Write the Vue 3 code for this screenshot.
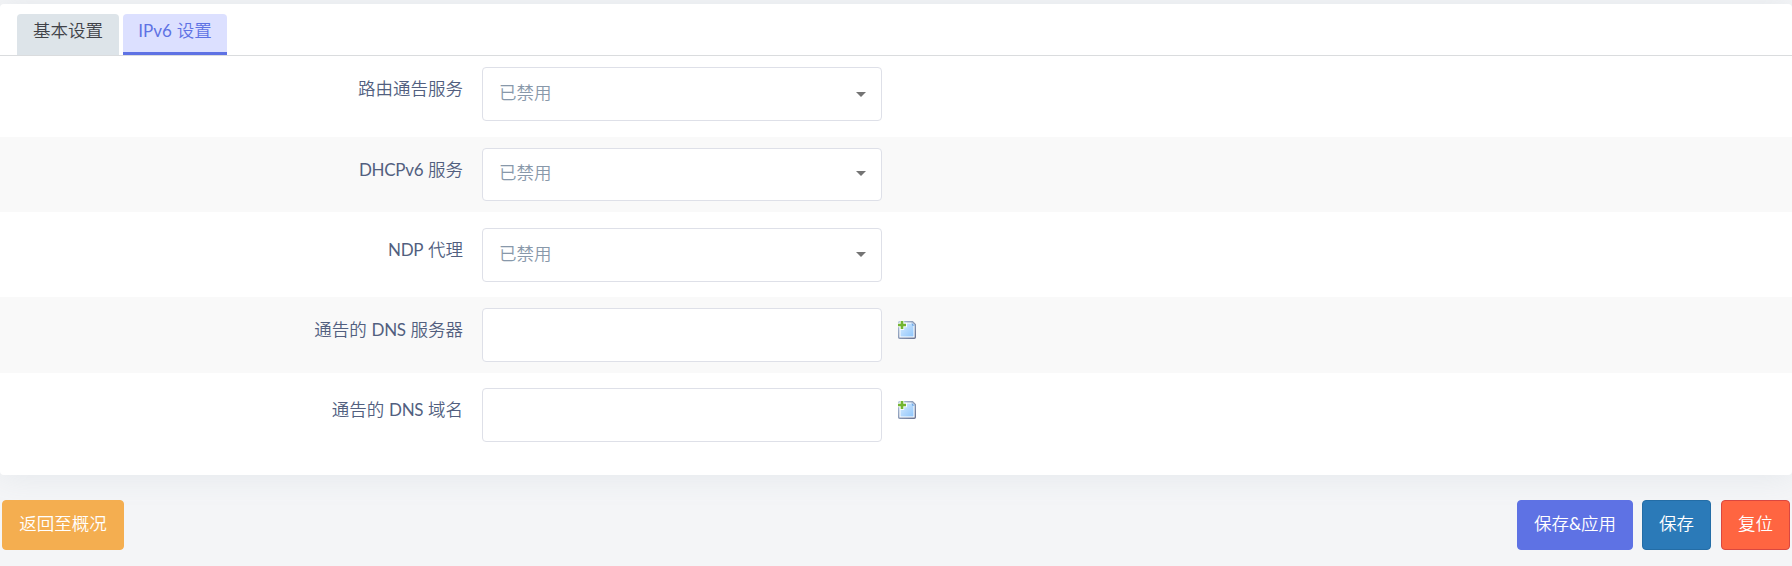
<script setup>
const rows = [
  { label: ['', '', '路由通告服务'], type: 'select', size: 'first' },
  { label: ['', 'DHCPv6', ' 服务'], type: 'select', size: 'second' },
  { label: ['', 'NDP', ' 代理'], type: 'select', size: 'third' },
  { label: ['通告的 ', 'DNS', ' 服务器'], type: 'list', size: 'fourth' },
  { label: ['通告的 ', 'DNS', ' 域名'], type: 'list', size: 'fifth' },
]
</script>

<template>
  <main class="page">
    <section class="card">
      <nav class="tabs">
        <a class="tab">基本设置</a>
        <a class="tab active"><span class="latin ip">IPv6</span> 设置</a>
      </nav>
      <div v-for="row in rows" :key="row.size" class="row" :class="row.size">
        <label class="label">{{ row.label[0] }}<span class="latin">{{ row.label[1] }}</span>{{ row.label[2] }}</label>
        <div class="field">
          <template v-if="row.type === 'select'">
            <span class="value">已禁用</span>
            <svg class="arrow" width="10" height="5" viewBox="0 0 10 5"><path d="M0 0H10L5 5Z" fill="#747474" /></svg>
          </template>
        </div>
        <svg v-if="row.type === 'list'" class="add" width="18" height="18" viewBox="0 0 18 18">
          <defs>
            <linearGradient :id="'edge-' + row.size" x1="0" y1="0" x2="1" y2="1">
              <stop offset="0" stop-color="#a9bfda" />
              <stop offset="1" stop-color="#6a7391" />
            </linearGradient>
            <linearGradient :id="'fill-' + row.size" x1="0" y1="0" x2="1" y2="1">
              <stop offset="0" stop-color="#d8ebff" />
              <stop offset="1" stop-color="#8fc6fb" />
            </linearGradient>
          </defs>
          <path d="M1.7 .7H14.5L17.3 3.5V16.3Q17.3 17.3 16.3 17.3H1.7Q.7 17.3 .7 16.3V1.7Q.7 .7 1.7 .7Z" fill="#fff" :stroke="`url(#edge-${row.size})`" stroke-width="1.4" />
          <path d="M2.5 2.5H13.2L15.5 5V15.5H2.5Z" :fill="`url(#fill-${row.size})`" />
          <path d="M13.3 1.2L16.8 4.7H14.2Z" fill="#71a9e5" />
          <path d="M1.8 0H6.2V1.8H9V6.2H6.2V9H1.8V6.2H0V1.8H1.8Z" fill="#fff" fill-opacity=".85" />
          <path d="M2.7 0H5.3V2.7H8V5.3H5.3V8H2.7V5.3H0V2.7H2.7Z" fill="#73b532" />
        </svg>
      </div>
    </section>
    <footer class="actions">
      <button class="btn back">返回至概况</button>
      <button class="btn apply">保存<span class="latin">&amp;</span>应用</button>
      <button class="btn save">保存</button>
      <button class="btn reset">复位</button>
    </footer>
  </main>
</template>

<style>
body {
  margin: 0;
  background: #f4f5f7;
}
</style>

<style scoped>
.page {
  box-sizing: border-box;
  height: 566px;
  padding-top: 4px;
  overflow: hidden;
  font-family: Lato, "Noto Sans CJK SC DemiLight", "Noto Sans CJK SC", sans-serif;
  font-size: 17.5px;
  font-weight: 350;
  line-height: 26px;
  color: #525f7f;
}
.latin {
  font-weight: 400;
  font-size: 17px;
  letter-spacing: -0.3px;
}
.latin.ip { letter-spacing: 0; }
.card {
  height: 471px;
  border-radius: 4px;
  background: #fff;
  box-shadow: 0 0 32px rgba(136, 152, 170, 0.15);
}
.tabs {
  display: flex;
  gap: 4px;
  box-sizing: border-box;
  height: 52px;
  padding: 10px 17px 0;
  border-bottom: 1px solid #dadcde;
}
.tab {
  box-sizing: border-box;
  width: 102px;
  height: 41px;
  padding-top: 4px;
  border-radius: 4px 4px 0 0;
  background: #dde4e9;
  color: #404248;
  text-align: center;
}
.tab.active {
  width: 104px;
  border-bottom: 3px solid #5e72e4;
  background: #dce0ff;
  color: #5e72e4;
}
.row {
  display: flex;
  align-items: flex-start;
  box-sizing: border-box;
}
.first { height: 81px; padding-top: 11px; }
.second { height: 75px; padding-top: 11px; background: #f9f9f9; }
.third { height: 85px; padding-top: 16px; }
.fourth { height: 76px; padding-top: 11px; background: #f9f9f9; }
.fifth { height: 102px; padding-top: 15px; }
.label {
  width: 463px;
  margin-right: 19px;
  padding-top: 9px;
  text-align: right;
}
.field {
  display: flex;
  justify-content: space-between;
  box-sizing: border-box;
  width: 400px;
  height: 54px;
  padding: 12px 15px 0 16px;
  border: 1px solid #dee0e8;
  border-radius: 4px;
  background: #fff;
  color: #8898aa;
}
.second .field { height: 53px; padding-top: 11px; }
.arrow { margin-top: 12px; }
.second .arrow { margin-top: 11px; }
.third .arrow { margin-top: 11px; }
.add { margin: 13px 0 0 16px; }
.actions {
  display: flex;
  padding: 25px 2px 0;
}
.btn {
  box-sizing: border-box;
  width: 69px;
  height: 50px;
  padding: 0 0 3px;
  border: 1px solid;
  border-radius: 4px;
  color: #fff;
  font: inherit;
  white-space: nowrap;
}
.back { width: 122px; margin-right: auto; background: #f4ae50; border-color: #f4ae50; }
.apply { width: 116px; background: #5e72e4; border-color: #5e72e4; }
.save { margin-left: 9px; background: #2b7ab8; border-color: #246da6; }
.reset { margin-left: 10px; background: #ff6541; border-color: #da4740; }
</style>
